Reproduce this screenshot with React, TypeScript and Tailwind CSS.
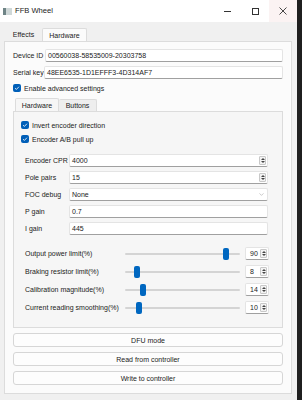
import { ChevronDown } from 'lucide-react'

const sliders = [
  { label: 'Output power limit(%)', value: 90 },
  { label: 'Braking resistor limit(%)', value: 8 },
  { label: 'Calibration magnitude(%)', value: 14 },
  { label: 'Current reading smoothing(%)', value: 10 },
]

function Check({ label }: { label: string }) {
  return (
    <div className="flex h-[10px] items-center gap-[3px]">
      <span className="flex h-[8px] w-[8px] items-center justify-center rounded-[2px] bg-[#005fb8]">
        <svg viewBox="0 0 8 8" className="h-[6px] w-[6px]">
          <path d="M1.4 4.2 3.2 5.9 6.6 2.3" fill="none" stroke="white" strokeWidth="1.1" />
        </svg>
      </span>
      <span>{label}</span>
    </div>
  )
}

function Spin() {
  return (
    <span className="flex h-[9px] w-[7px] flex-col items-center justify-center gap-[1px] rounded-[1px] border border-[#c8c8c8] bg-[#f3f3f3]">
      <svg viewBox="0 0 6 3" className="h-[2px] w-[4px]">
        <path d="M0 3 3 0 6 3Z" fill="#444" />
      </svg>
      <svg viewBox="0 0 6 3" className="h-[2px] w-[4px]">
        <path d="M0 0 3 3 6 0Z" fill="#444" />
      </svg>
    </span>
  )
}

function Field({ value, kind }: { value: string; kind?: 'spin' | 'combo' }) {
  return (
    <div className="flex h-[13px] flex-1 items-center justify-between rounded-[2px] border border-[#e4e4e4] border-b-[#a0a0a0] bg-white pl-[2px] pr-[1px]">
      <span>{value}</span>
      {kind === 'spin' && <Spin />}
      {kind === 'combo' && <ChevronDown className="mr-[1px] h-[7px] w-[7px] text-[#8a8a8a]" strokeWidth={1.5} />}
    </div>
  )
}

function FormRow({ label, value, kind }: { label: string; value: string; kind?: 'spin' | 'combo' }) {
  return (
    <div className="flex h-[13px] items-center">
      <span className="w-[44px] shrink-0">{label}</span>
      <Field value={value} kind={kind} />
    </div>
  )
}

function SliderRow({ label, value }: { label: string; value: number }) {
  return (
    <div className="flex h-[13px] items-center">
      <span className="w-[100px] shrink-0">{label}</span>
      <div className="relative h-[13px] w-[115px]">
        <div className="absolute left-0 right-0 top-[6px] h-[2px] rounded-full bg-[#d4d4d4]" />
        <div className="absolute top-[0.5px] h-[12px] w-[6px] rounded-[2px] bg-[#0067c0]" style={{ left: value * 1.09 }} />
      </div>
      <div className="ml-[5px] flex h-[13px] w-[24px] items-center justify-between rounded-[2px] border border-[#e4e4e4] border-b-[#a0a0a0] bg-white pl-[4px] pr-[1px]">
        <span>{value}</span>
        <Spin />
      </div>
    </div>
  )
}

function Button({ label }: { label: string }) {
  return (
    <div className="flex h-[14px] items-center justify-center rounded-[3px] border border-[#d6d6d6] bg-[#fdfdfd]">
      {label}
    </div>
  )
}

export default function App() {
  return (
    <div className="flex h-[400px] w-[302px] overflow-hidden whitespace-nowrap bg-[#1f1f1f] font-['Segoe_UI','Liberation_Sans',Arial,sans-serif] text-[7px] leading-none text-[#222]">
      <div className="flex w-[297px] flex-col bg-[#f0f0f0]">
        {/* title bar */}
        <div className="flex h-[22px] items-center bg-white">
          <svg viewBox="0 0 9 7" className="ml-[3px] h-[7px] w-[9px]">
            <rect x="0" y="0" width="9" height="7" fill="#cfd8d8" />
            <rect x="0" y="0" width="3" height="7" fill="#6f8486" />
          </svg>
          <span className="ml-[3px] text-[7.6px]">FFB Wheel</span>
          <div className="ml-auto flex h-full">
            <div className="flex w-[28px] items-center justify-center">
              <div className="h-[1px] w-[7px] bg-[#333]" />
            </div>
            <div className="flex w-[28px] items-center justify-center">
              <div className="h-[7px] w-[7px] border border-[#333]" />
            </div>
            <div className="flex w-[28px] items-center justify-center bg-[#fbf3f3]">
              <svg viewBox="0 0 8 8" className="h-[8px] w-[8px]">
                <path d="M0.5 0.5 7.5 7.5M7.5 0.5 0.5 7.5" stroke="#333" strokeWidth="0.9" />
              </svg>
            </div>
          </div>
        </div>

        {/* tabs */}
        <div className="mt-[6px] flex h-[13px] pl-[5px]">
          <div className="flex w-[37px] items-center justify-center">Effects</div>
          <div className="flex w-[45px] items-center justify-center rounded-t-[2px] border border-b-0 border-[#dcdcdc] bg-[#fbfbfb]">
            Hardware
          </div>
        </div>

        {/* outer pane */}
        <div className="ml-[4px] flex h-[353px] w-[288px] flex-col border border-[#dcdcdc] bg-[#fbfbfb] px-[8px] pt-[7px]">
          <div className="flex h-[13px] items-center">
            <span className="w-[32px] shrink-0">Device ID</span>
            <Field value="00560038-58535009-20303758" />
          </div>
          <div className="mt-[4px] flex h-[13px] items-center">
            <span className="w-[31px] shrink-0">Serial key</span>
            <Field value="48EE6535-1D1EFFF3-4D314AF7" />
          </div>
          <div className="mt-[4px]">
            <Check label="Enable advanced settings" />
          </div>

          {/* inner tabs */}
          <div className="mt-[5px] flex h-[13px] pl-[2px]">
            <div className="flex w-[44px] items-center justify-center rounded-t-[2px] border border-b-0 border-[#dcdcdc] bg-[#f6f6f6]">
              Hardware
            </div>
            <div className="mt-[1px] flex w-[38px] items-center justify-center rounded-t-[2px] border border-b-0 border-l-0 border-[#dcdcdc] bg-[#eeeeee]">
              Buttons
            </div>
          </div>

          {/* inner pane */}
          <div className="flex h-[217px] flex-col border border-[#dcdcdc] bg-[#f6f6f6] pl-[7px] pt-[8px]">
            <Check label="Invert encoder direction" />
            <div className="mt-[4px]">
              <Check label="Encoder A/B pull up" />
            </div>
            <div className="mt-[10px] flex flex-col gap-[4px] pl-[4px] pr-[14px]">
              <FormRow label="Encoder CPR" value="4000" kind="spin" />
              <FormRow label="Pole pairs" value="15" kind="spin" />
              <FormRow label="FOC debug" value="None" kind="combo" />
              <FormRow label="P gain" value="0.7" />
              <FormRow label="I gain" value="445" />
            </div>
            <div className="mt-[12px] flex flex-col gap-[5px] pl-[4px]">
              {sliders.map((s) => (
                <SliderRow key={s.label} label={s.label} value={s.value} />
              ))}
            </div>
          </div>

          <div className="mt-[5px] flex flex-col gap-[5px]">
            <Button label="DFU mode" />
            <Button label="Read from controller" />
            <Button label="Write to controller" />
          </div>
        </div>
      </div>
    </div>
  )
}
